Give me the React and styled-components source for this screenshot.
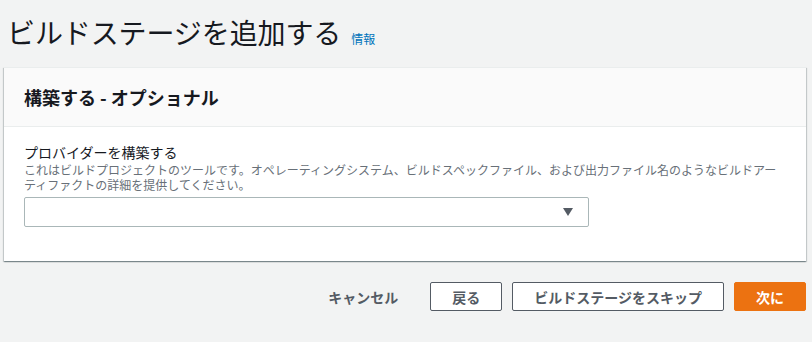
import React from "react";
import styled, { createGlobalStyle, css } from "styled-components";

const GlobalStyle = createGlobalStyle`
  html, body {
    margin: 0;
    padding: 0;
    background-color: #f2f3f3;
    font-family: "Noto Sans CJK JP", "Noto Sans", "Liberation Sans", sans-serif;
    color: #16191f;
  }
`;

const Page = styled.div`
  width: 812px;
  height: 342px;
  padding: 0 6px 0 4px;
  box-sizing: border-box;
`;

const TitleRow = styled.div`
  display: flex;
  align-items: baseline;
  gap: 10px;
  padding: 12px 0 0 3px;
  height: 55px;
  box-sizing: border-box;
`;

const Title = styled.h1`
  margin: 0;
  font-size: 28px;
  font-weight: 400;
  line-height: 40px;
  letter-spacing: -0.1px;
`;

const InfoLink = styled.a`
  font-size: 12px;
  color: #0073bb;
  text-decoration: none;
`;

const Card = styled.section`
  background-color: #fff;
  border-top: 1px solid #eaeded;
  box-shadow: 0 1px 1px 0 rgba(0, 28, 36, 0.3),
    1px 1px 1px 0 rgba(0, 28, 36, 0.15), -1px 1px 1px 0 rgba(0, 28, 36, 0.15);
  margin-top: 12px;
`;

const CardHeader = styled.div`
  display: flex;
  align-items: center;
  height: 58px;
  padding: 0 20px;
  background-color: #fafafa;
  border-bottom: 1px solid #eaeded;
`;

const CardTitle = styled.h2`
  margin: 0;
  font-size: 18px;
  font-weight: 700;
`;

const CardBody = styled.div`
  padding: 15px 20px 34px;
`;

const Label = styled.label`
  display: block;
  font-size: 14px;
  font-weight: 400;
  line-height: 20px;
`;

const Description = styled.p`
  margin: 0 0 5px;
  font-size: 12px;
  line-height: 15px;
  color: #687078;
`;

const SelectBox = styled.div`
  display: flex;
  align-items: center;
  justify-content: flex-end;
  width: 565px;
  height: 30px;
  box-sizing: border-box;
  border: 1px solid #aab7b8;
  border-radius: 2px;
  padding-right: 14px;
  background-color: #fff;
`;

const Caret = styled.svg`
  width: 12px;
  height: 8px;
  fill: #545b64;
`;

const Actions = styled.div`
  display: flex;
  justify-content: flex-end;
  align-items: center;
  gap: 10px;
  margin-top: 21px;
`;

const Button = styled.button`
  height: 29px;
  padding: 0 21px;
  font-family: inherit;
  font-size: 14px;
  font-weight: 700;
  border-radius: 2px;
  border: 1px solid #545b64;
  background-color: #fff;
  color: #545b64;
  cursor: pointer;

  ${({ variant }) =>
    variant === "link" &&
    css`
      border-color: transparent;
      background-color: transparent;
    `}

  ${({ variant }) =>
    variant === "primary" &&
    css`
      border-color: #ec7211;
      background-color: #ec7211;
      color: #fff;
    `}
`;

const App = () => (
  <>
    <GlobalStyle />
    <Page>
      <TitleRow>
        <Title>ビルドステージを追加する</Title>
        <InfoLink href="#">情報</InfoLink>
      </TitleRow>
      <Card>
        <CardHeader>
          <CardTitle>構築する - オプショナル</CardTitle>
        </CardHeader>
        <CardBody>
          <Label>プロバイダーを構築する</Label>
          <Description>
            これはビルドプロジェクトのツールです。オペレーティングシステム、ビルドスペックファイル、および出力ファイル名のようなビルドアーティファクトの詳細を提供してください。
          </Description>
          <SelectBox>
            <Caret viewBox="0 0 12 8">
              <path d="M1 0h10L6 8z" />
            </Caret>
          </SelectBox>
        </CardBody>
      </Card>
      <Actions>
        <Button variant="link">キャンセル</Button>
        <Button>戻る</Button>
        <Button>ビルドステージをスキップ</Button>
        <Button variant="primary">次に</Button>
      </Actions>
    </Page>
  </>
);

export default App;
